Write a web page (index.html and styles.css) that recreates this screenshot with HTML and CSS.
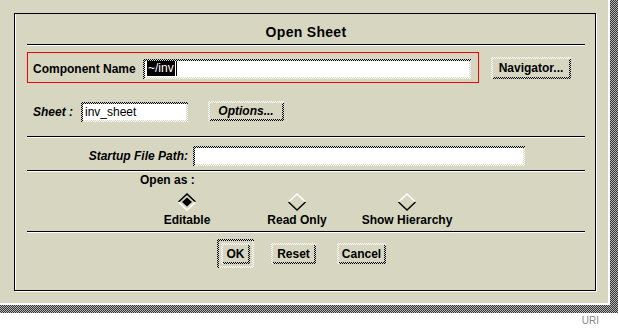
FILE: index.html
```html
<!DOCTYPE html>
<html lang="en">
<head>
  <meta charset="UTF-8">
  <title>Open Sheet</title>
  <link rel="stylesheet" href="styles.css">
</head>
<body>
  <div class="screen">
    <div class="window">
      <div class="frame">
        <div class="title">Open Sheet</div>
        <div class="rule"></div>

        <div class="row row-component">
          <div class="highlight">
            <span class="label">Component Name</span>
            <div class="sunken field-component">
              <div class="edge">
                <div class="well"><span class="selected">~/inv</span><span class="caret"></span></div>
              </div>
            </div>
          </div>
          <div class="raised btn btn-navigator">
            <div class="edge"><div class="face">Navigator...</div></div>
          </div>
        </div>

        <div class="row row-sheet">
          <span class="label italic sheet-label">Sheet :</span>
          <div class="sunken field-sheet">
            <div class="edge"><div class="well">inv_sheet</div></div>
          </div>
          <div class="raised btn btn-options">
            <div class="edge"><div class="face italic">Options...</div></div>
          </div>
        </div>

        <div class="rule rule-sheet"></div>

        <div class="row row-startup">
          <span class="label italic startup-label">Startup File Path:</span>
          <div class="sunken field-startup">
            <div class="edge"><div class="well"></div></div>
          </div>
        </div>

        <div class="rule rule-startup"></div>

        <div class="open-as label">Open as :</div>
        <div class="radios">
          <div class="radio">
            <svg width="20" height="18" viewBox="0 0 20 18">
              <polygon points="10,4.5 15,9 10,13.5 5,9" fill="#000"/>
              <polyline points="1.5,9 10,1 18.5,9" fill="none" stroke="#000" stroke-width="1.6"/>
              <polyline points="1.5,9 10,17 18.5,9" fill="none" stroke="#fff" stroke-width="1.6"/>
            </svg>
            <span class="label">Editable</span>
          </div>
          <div class="radio">
            <svg width="20" height="18" viewBox="0 0 20 18">
              <polyline points="1.5,9 10,1 18.5,9" fill="none" stroke="#fff" stroke-width="1.4"/>
              <polyline points="1.5,9 10,17 18.5,9" fill="none" stroke="#000" stroke-width="1.4"/>
            </svg>
            <span class="label">Read Only</span>
          </div>
          <div class="radio">
            <svg width="20" height="18" viewBox="0 0 20 18">
              <polyline points="1.5,9 10,1 18.5,9" fill="none" stroke="#fff" stroke-width="1.4"/>
              <polyline points="1.5,9 10,17 18.5,9" fill="none" stroke="#000" stroke-width="1.4"/>
            </svg>
            <span class="label">Show Hierarchy</span>
          </div>
        </div>

        <div class="rule rule-radios"></div>

        <div class="actions">
          <div class="sunken default-ring">
            <div class="edge">
              <div class="ring-inner">
                <div class="raised btn btn-ok">
                  <div class="edge"><div class="face">OK</div></div>
                </div>
              </div>
            </div>
          </div>
          <div class="raised btn btn-reset">
            <div class="edge"><div class="face">Reset</div></div>
          </div>
          <div class="raised btn btn-cancel">
            <div class="edge"><div class="face">Cancel</div></div>
          </div>
        </div>
      </div>
    </div>
  </div>
  <div class="footer">URI</div>
</body>
</html>
```

FILE: styles.css
```css
body {
  margin: 0;
  background-color: #fff;
  font-family: "Liberation Sans", Arial, sans-serif;
  font-size: 12px;
  color: #000;
}

.screen {
  width: 618px;
  height: 313px;
  background: repeating-conic-gradient(#333 0 25%, #b4b4b4 0 50%) 0 0 / 2px 2px;
}

.window {
  width: 610px;
  height: 305px;
  box-sizing: border-box;
  border-right: 2px solid #fff;
  border-bottom: 2px solid #fff;
  background-color: #d7d7c1;
  padding: 13px 0 0 14px;
}

.frame {
  width: 582px;
  height: 278px;
  box-sizing: border-box;
  border: 1px solid #000;
  box-shadow: inset 1px 0 #fff, 1px 1px #fff;
  padding: 0 10px 0 12px;
}

.title {
  height: 30px;
  line-height: 36px;
  text-align: center;
  font-size: 14px;
  font-weight: bold;
  letter-spacing: 0.3px;
}

.rule {
  height: 0;
  border-top: 1px solid #000;
  border-bottom: 1px solid #fff;
}

.label {
  font-weight: bold;
  white-space: nowrap;
}

.italic {
  font-style: italic;
}

/* dotted 3d edges */
.sunken,
.raised {
  box-sizing: border-box;
  padding: 2px 0 0 2px;
}

.sunken {
  background: repeating-conic-gradient(#000 0 25%, transparent 0 50%) 0 0 / 2px 2px, #d7d7c1;
}

.raised {
  background: repeating-conic-gradient(#fff 0 25%, transparent 0 50%) 0 0 / 2px 2px, #d7d7c1;
}

.edge {
  height: 100%;
  box-sizing: border-box;
  padding: 0 2px 2px 0;
}

.sunken > .edge {
  background: repeating-conic-gradient(#fff 0 25%, transparent 0 50%) 1px 1px / 2px 2px, #d7d7c1;
}

.raised > .edge {
  background: repeating-conic-gradient(#000 0 25%, transparent 0 50%) 1px 1px / 2px 2px, #d7d7c1;
}

.well {
  height: 100%;
  background-color: #fff;
  display: flex;
  align-items: center;
  padding-left: 2px;
  font-size: 12px;
  white-space: nowrap;
}

.face {
  height: 100%;
  background-color: #d7d7c1;
  display: flex;
  align-items: center;
  justify-content: center;
  font-weight: bold;
  white-space: nowrap;
}

.row {
  display: flex;
  align-items: center;
}

.row-component {
  margin-top: 6px;
}

.highlight {
  width: 452px;
  height: 31px;
  box-sizing: border-box;
  border: 1px solid #f00;
  display: flex;
  align-items: center;
  justify-content: space-between;
  padding: 2px 7px 0 5px;
}

.field-component {
  width: 328px;
  height: 20px;
}

.selected {
  background-color: #000;
  color: #fff;
  padding: 0 1px;
  line-height: 15px;
}

.caret {
  width: 1px;
  height: 15px;
  background-color: #000;
  margin-left: 1px;
}

.btn {
  height: 21px;
}

.btn-navigator {
  width: 80px;
  height: 22px;
  margin-left: 12px;
}

.row-sheet {
  margin-top: 19px;
  height: 20px;
  padding-left: 6px;
}

.sheet-label {
  width: 48px;
}

.field-sheet {
  width: 107px;
  height: 20px;
}

.btn-options {
  width: 76px;
  height: 20px;
  margin-left: 20px;
  margin-top: -2px;
}

.rule-sheet {
  margin-top: 14px;
}

.row-startup {
  margin-top: 8px;
  height: 20px;
}

.startup-label {
  width: 161px;
  text-align: right;
  margin-right: 5px;
}

.field-startup {
  width: 332px;
  height: 20px;
}

.rule-startup {
  margin-top: 4px;
}

.open-as {
  height: 16px;
  line-height: 17px;
  padding-left: 113px;
}

.radios {
  display: flex;
  margin-top: 5px;
  margin-left: 105px;
}

.radio {
  width: 110px;
  display: flex;
  flex-direction: column;
  align-items: center;
}

.radio svg {
  display: block;
}

.radio .label {
  line-height: 19px;
}

.rule-radios {
  margin-top: 1px;
}

.actions {
  display: flex;
  align-items: center;
  margin-top: 6px;
  padding-left: 190px;
}

.default-ring {
  width: 37px;
  height: 29px;
}

.ring-inner {
  height: 100%;
  box-sizing: border-box;
  padding: 2px;
  background-color: #d7d7c1;
}

.btn-ok {
  width: 29px;
  height: 21px;
}

.btn-reset {
  width: 45px;
  margin-left: 17px;
}

.btn-cancel {
  width: 49px;
  margin-left: 21px;
}

.footer {
  width: 618px;
  box-sizing: border-box;
  padding-right: 19px;
  text-align: right;
  font-size: 10px;
  line-height: 16px;
  color: #8a8a8a;
}
```
